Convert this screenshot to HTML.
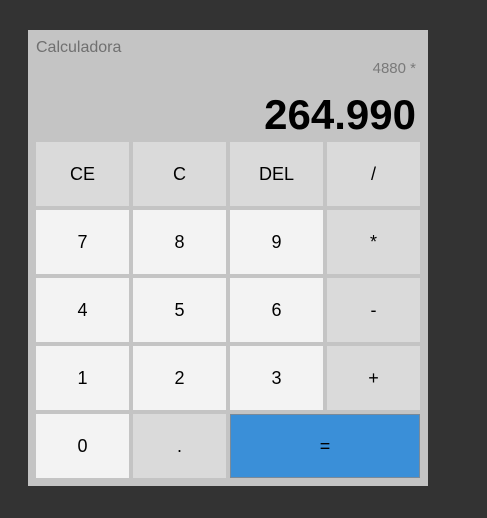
<!DOCTYPE html>
<html><head><style>
html,body{margin:0;padding:0;width:487px;height:518px;background:#333;overflow:hidden;font-family:"Liberation Sans",Arial,sans-serif}
.p{position:absolute;left:28px;top:30px;width:400px;height:456px;background:#c4c4c4}
.t{position:absolute;left:36px;top:39px;font-size:16px;color:#707070}
.h{position:absolute;right:71px;top:60px;font-size:15px;color:#7a7a7a}
.r{position:absolute;right:71px;top:91px;font-size:42px;font-weight:bold;color:#000;line-height:48px}
.b{position:absolute;width:93px;height:64px;display:flex;align-items:center;justify-content:center;font-size:18px;color:#000;background:#f3f3f3;box-sizing:border-box}
.g{background:#dadada}
.e{background:#3a8fd8;border:1px solid #7a8a99}
</style></head><body>
<div class="p"></div>
<div class="t">Calculadora</div>
<div class="h">4880 *</div>
<div class="r">264.990</div>
<div class="b g" style="left:36px;top:142px">CE</div>
<div class="b g" style="left:133px;top:142px">C</div>
<div class="b g" style="left:230px;top:142px">DEL</div>
<div class="b g" style="left:327px;top:142px">/</div>
<div class="b" style="left:36px;top:210px">7</div>
<div class="b" style="left:133px;top:210px">8</div>
<div class="b" style="left:230px;top:210px">9</div>
<div class="b g" style="left:327px;top:210px">*</div>
<div class="b" style="left:36px;top:278px">4</div>
<div class="b" style="left:133px;top:278px">5</div>
<div class="b" style="left:230px;top:278px">6</div>
<div class="b g" style="left:327px;top:278px">-</div>
<div class="b" style="left:36px;top:346px">1</div>
<div class="b" style="left:133px;top:346px">2</div>
<div class="b" style="left:230px;top:346px">3</div>
<div class="b g" style="left:327px;top:346px">+</div>
<div class="b" style="left:36px;top:414px">0</div>
<div class="b g" style="left:133px;top:414px">.</div>
<div class="b e" style="left:230px;top:414px;width:190px">=</div>
</body></html>
